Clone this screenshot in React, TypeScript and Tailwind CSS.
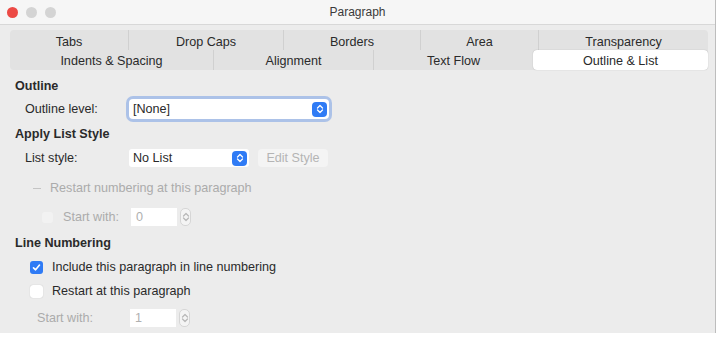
import React from 'react';

const topTabs = [
  { label: 'Tabs', w: 118 },
  { label: 'Drop Caps', w: 155 },
  { label: 'Borders', w: 137 },
  { label: 'Area', w: 118 },
  { label: 'Transparency', w: 170 },
];

const bottomTabs = [
  { label: 'Indents & Spacing', w: 203, active: false },
  { label: 'Alignment', w: 160, active: false },
  { label: 'Text Flow', w: 160, active: false },
  { label: 'Outline & List', w: 175, active: true },
];

function UpDown({ className }: { className?: string }) {
  return (
    <svg width="8" height="10" viewBox="0 0 8 10" className={className}>
      <path d="M1.5 4 L4 1.5 L6.5 4" fill="none" stroke="currentColor" strokeWidth="1.3" strokeLinecap="round" strokeLinejoin="round" />
      <path d="M1.5 6 L4 8.5 L6.5 6" fill="none" stroke="currentColor" strokeWidth="1.3" strokeLinecap="round" strokeLinejoin="round" />
    </svg>
  );
}

function BlueButton() {
  return (
    <div className="flex h-[15px] w-[15px] items-center justify-center rounded-[4px] bg-[#2f7bf5] text-white">
      <UpDown />
    </div>
  );
}

function Spin({ value }: { value: string }) {
  return (
    <div className="flex items-center gap-[3px]">
      <div className="flex h-[18px] w-[46px] items-center bg-white pl-[5px] text-[#b0b0b0]">{value}</div>
      <div className="flex h-[18px] w-[11px] items-center justify-center rounded-[5px] border border-[#d6d6d6] bg-[#f4f4f4] text-[#b8b8b8]">
        <UpDown />
      </div>
    </div>
  );
}

export default function App() {
  return (
    <div className="h-[337px] w-[720px] bg-white text-[12.6px] text-[#2a2a2a]" style={{ fontFamily: '"Liberation Sans", Arial, sans-serif' }}>
      <div className="flex h-[333px] w-[716px] flex-col border-r border-[#bdbdbd] bg-[#ececec]">
        {/* Title bar */}
        <div className="relative flex h-[25px] items-center justify-center border-b border-[#d8d8d8] bg-[#f6f6f6]">
          <div className="absolute left-[7px] top-[7px] flex gap-[8px]">
            <div className="h-[11px] w-[11px] rounded-full bg-[#ec4a45]" />
            <div className="h-[11px] w-[11px] rounded-full bg-[#d4d4d4]" />
            <div className="h-[11px] w-[11px] rounded-full bg-[#d4d4d4]" />
          </div>
          <span className="text-[12px] text-[#3a3a3a]">Paragraph</span>
        </div>

        {/* Tabs */}
        <div className="flex flex-col pl-[10px] pt-[5px]">
          <div className="flex h-[20px] w-[698px] items-center rounded-t-[4px] bg-[#e2e2e2]">
            {topTabs.map((t, i) => (
              <div
                key={t.label}
                className={`flex h-full items-center justify-center pt-[4px] ${i > 0 ? 'border-l border-[#d0d0d0]' : ''}`}
                style={{ width: t.w }}
              >
                {t.label}
              </div>
            ))}
          </div>
          <div className="flex h-[20px] w-[698px] items-center rounded-b-[4px] bg-[#e2e2e2]">
            {bottomTabs.map((t, i) => (
              <div
                key={t.label}
                className={`flex h-full items-center justify-center pt-[3px] ${t.active ? 'rounded-[4px] bg-white shadow-[0_0_1px_rgba(0,0,0,0.3)]' : ''} ${i > 0 && !t.active ? 'border-l border-[#d0d0d0]' : ''}`}
                style={{ width: t.w }}
              >
                {t.label}
              </div>
            ))}
          </div>
        </div>

        {/* Content */}
        <div className="flex flex-col pl-[15px] pt-[6px]">
          <div className="flex h-[20px] items-center font-bold">Outline</div>
          <div className="flex h-[26px] items-center pl-[10px]">
            <span className="w-[104px]">Outline level:</span>
            <div className="flex h-[20px] w-[200px] items-center justify-between rounded-[4px] bg-white pl-[4px] pr-[2px] shadow-[0_0_0_3px_rgba(120,160,230,0.55)]">
              <span>[None]</span>
              <BlueButton />
            </div>
          </div>
          <div className="flex h-[24px] items-center font-bold">Apply List Style</div>
          <div className="flex h-[24px] items-center pl-[10px]">
            <span className="w-[104px]">List style:</span>
            <div className="flex h-[18px] w-[120px] items-center justify-between rounded-[3px] bg-white pl-[4px] pr-[2px]">
              <span>No List</span>
              <BlueButton />
            </div>
            <div className="ml-[9px] flex h-[18px] w-[70px] items-center justify-center rounded-[4px] bg-[#f4f4f4] text-[#b4b4b4]">
              Edit Style
            </div>
          </div>
          <div className="flex h-[36px] items-center pl-[18px] text-[#ababab]">
            <span className="mr-[9px] block h-[1px] w-[8px] bg-[#c4c4c4]" />
            Restart numbering at this paragraph
          </div>
          <div className="flex h-[22px] items-center pl-[27px] text-[#ababab]">
            <div className="mr-[10px] h-[11px] w-[11px] rounded-[3px] bg-[#f2f2f2]" />
            <span className="w-[68px]">Start with:</span>
            <Spin value="0" />
          </div>
          <div className="flex h-[30px] items-center font-bold">Line Numbering</div>
          <div className="flex h-[18px] items-center pl-[15px]">
            <div className="mr-[9px] flex h-[13px] w-[13px] items-center justify-center rounded-[3px] bg-[#2f7bf5]">
              <svg width="9" height="9" viewBox="0 0 9 9">
                <path d="M1.5 4.8 L3.6 6.8 L7.5 2" fill="none" stroke="white" strokeWidth="1.6" strokeLinecap="round" strokeLinejoin="round" />
              </svg>
            </div>
            Include this paragraph in line numbering
          </div>
          <div className="flex h-[30px] items-center pl-[15px]">
            <div className="mr-[9px] h-[13px] w-[13px] rounded-[3px] bg-white shadow-[0_0_1px_rgba(0,0,0,0.25)]" />
            Restart at this paragraph
          </div>
          <div className="flex h-[24px] items-center pl-[22px] text-[#ababab]">
            <span className="w-[93px]">Start with:</span>
            <Spin value="1" />
          </div>
        </div>
      </div>
    </div>
  );
}
